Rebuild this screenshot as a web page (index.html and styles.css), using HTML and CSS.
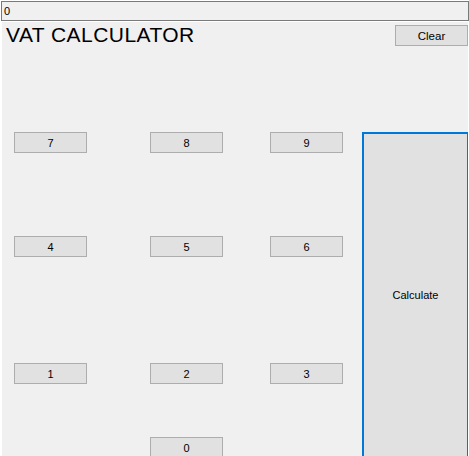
FILE: index.html
```html
<!DOCTYPE html>
<html>
<head>
<meta charset="utf-8">
<link rel="stylesheet" href="styles.css">
</head>
<body>
<div class="display">0</div>
<div class="form">
  <div class="header">
    <div class="title">VAT CALCULATOR</div>
    <button class="btn clear">Clear</button>
  </div>
  <div class="keypad">
    <button class="btn k7">7</button>
    <button class="btn k8">8</button>
    <button class="btn k9">9</button>
    <button class="btn calc">Calculate</button>
    <button class="btn k4">4</button>
    <button class="btn k5">5</button>
    <button class="btn k6">6</button>
    <button class="btn k1">1</button>
    <button class="btn k2">2</button>
    <button class="btn k3">3</button>
    <button class="btn k0">0</button>
  </div>
</div>
</body>
</html>
```
FILE: styles.css
```css
html, body {
  margin: 0;
  padding: 0;
  background: #ffffff;
  overflow: hidden;
  width: 469px;
  height: 456px;
  font-family: "Liberation Sans", Arial, sans-serif;
}
.display {
  box-sizing: border-box;
  margin: 1px 0 0 1px;
  width: 468px;
  height: 20px;
  border: 1px solid #7a7a7a;
  background: #f0f0f0;
  font-size: 11px;
  line-height: 18px;
  padding-left: 2px;
  color: #000;
}
.form {
  margin: 1px 0 0 2px;
  width: 466px;
  height: 434px;
  overflow: hidden;
  background: #f0f0f0;
}
.header {
  box-sizing: border-box;
  height: 110px;
  display: flex;
  justify-content: space-between;
  align-items: flex-start;
  padding: 1px 0 0 4px;
}
.title {
  font-size: 21px;
  letter-spacing: 0.45px;
  line-height: 24px;
  color: #000;
}
.btn {
  box-sizing: border-box;
  margin: 0;
  padding: 0;
  border: 1px solid #adadad;
  background: #e1e1e1;
  font-family: "Liberation Sans", Arial, sans-serif;
  font-size: 11px;
  color: #000;
  width: 73px;
  height: 21px;
}
.clear {
  margin-top: 2px;
  font-size: 11.5px;
}
.keypad {
  display: grid;
  padding-left: 12px;
  grid-template-columns: 73px 63px 73px 47px 73px 19px 107px;
  grid-template-rows: 21px 83px 21px 106px 21px 53px 21px;
}
.k7 { grid-column: 1; grid-row: 1; }
.k8 { grid-column: 3; grid-row: 1; }
.k9 { grid-column: 5; grid-row: 1; }
.k4 { grid-column: 1; grid-row: 3; }
.k5 { grid-column: 3; grid-row: 3; }
.k6 { grid-column: 5; grid-row: 3; }
.k1 { grid-column: 1; grid-row: 5; }
.k2 { grid-column: 3; grid-row: 5; }
.k3 { grid-column: 5; grid-row: 5; }
.k0 { grid-column: 3; grid-row: 7; }
.calc {
  grid-column: 7;
  grid-row: 1 / 8;
  width: 107px;
  height: 326px;
  border: 2px solid #0078d7;
}
```
